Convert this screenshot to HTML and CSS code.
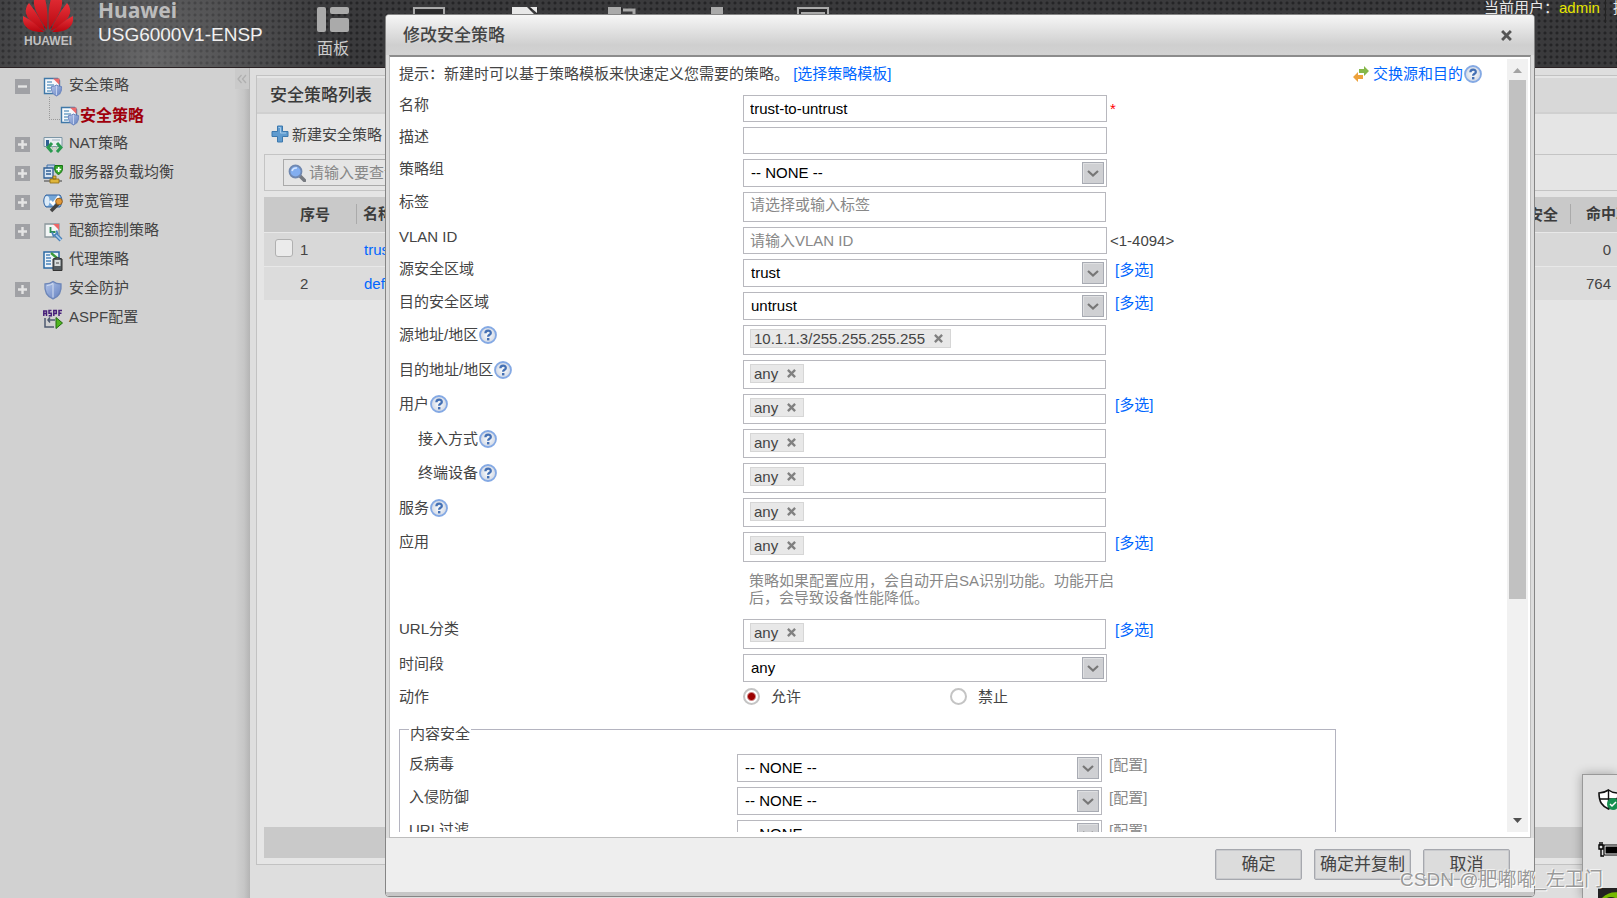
FILE: index.html
```html
<!DOCTYPE html>
<html lang="zh-CN">
<head>
<meta charset="utf-8">
<title>USG6000V1-ENSP</title>
<link rel="stylesheet" href="styles.css">
</head>
<body>
<svg class="defs" aria-hidden="true">
  <defs>
    <linearGradient id="shieldFill" x1="0" y1="0" x2="1" y2="1"><stop offset="0" stop-color="#b4c6ea"/><stop offset="1" stop-color="#6380c0"/></linearGradient>
    <linearGradient id="petalFill" x1="0" y1="0" x2="0" y2="1"><stop offset="0" stop-color="#e8323a"/><stop offset="1" stop-color="#b8060f"/></linearGradient>
    <radialGradient id="helpFill"><stop offset="0" stop-color="#fdfefe"/><stop offset="1" stop-color="#d0d7e4"/></radialGradient>
    <symbol id="help" viewBox="0 0 18 18">
      <circle cx="9" cy="9" r="8" fill="url(#helpFill)" stroke="#84a9e4" stroke-width="1.8"/>
      <path d="M6.400 7.200c0-3.400 5.400-3.400 5.400-.3 0 2-2.600 1.800-2.700 3.900" fill="none" stroke="#4470b4" stroke-width="2.300"/>
      <rect x="8" y="12" width="2.400" height="2.400" fill="#4470b4"/>
    </symbol>
    <symbol id="chev" viewBox="0 0 22 22">
      <rect x=".5" y=".5" width="21" height="21" fill="#cfd0d3" stroke="#a8abb3"/>
      <path d="M1.500 20.500V1.500h19" fill="none" stroke="#dfe0e2"/>
      <path d="M6 9l5 4.500L16 9" fill="none" stroke="#777" stroke-width="2.200"/>
    </symbol>
    <symbol id="cross" viewBox="0 0 10 10"><path d="M1 1l8 8M9 1L1 9" fill="none" stroke="currentColor" stroke-width="2.600"/></symbol>
    <symbol id="policy" viewBox="0 0 20 20">
      <path d="M1.500 1.500h13l2 2V16.500h-15z" fill="#f6f9fc" stroke="#3f78a8" stroke-width="1.400"/>
      <path d="M10 1.500h6.500V8z" fill="#ee6a6a"/>
      <path d="M4 5h5M4 8h7M4 11h4M4 14h4" stroke="#72a3c8" stroke-width="1.400"/>
      <path d="M8.500 9.500q3 0 5-1.500 2 1.500 5 1.500c.5 5-1.500 8-5 9.500-3.500-1.500-5.500-4.500-5-9.500z" fill="url(#shieldFill)" stroke="#6d86c0"/>
      <path d="M13.500 9v9" stroke="#c5d2ee"/>
    </symbol>
    <symbol id="toggleplus" viewBox="0 0 15 15"><path d="M0 0h15v15H0z" fill="#a0a1a5"/><path d="M3 7.500h9M7.500 3v9" stroke="#e4e4e4" stroke-width="2.400"/></symbol>
    <symbol id="toggleminus" viewBox="0 0 15 15"><path d="M0 0h15v15H0z" fill="#a0a1a5"/><path d="M3 7.500h9" stroke="#e4e4e4" stroke-width="2.400"/></symbol>
  </defs>
</svg>

<header class="top">
  <div class="logo">
    <svg viewBox="0 0 50 34" width="50" height="34" aria-hidden="true">
      <g fill="url(#petalFill)">
        <path d="M24 30C25 18 25 6 20-8c-8 2-11 8-8 16 2 7 7 14 12 22z"/>
        <path d="M26 30C25 18 25 6 30-8c8 2 11 8 8 16-2 7-7 14-12 22z"/>
        <path d="M22.500 31C19 21 13 12 6 3 0 10 3 17 9 22c4 4 9 7 13.500 9z"/>
        <path d="M27.500 31C31 21 37 12 44 3c6 7 3 14-3 19-4 4-9 7-13.500 9z"/>
        <path d="M21 32C15 26 8 20 0 16c-1 9 4 13 10 15 4 1 8 1 11 1z"/>
        <path d="M29 32c6-6 13-12 21-16 1 9-4 13-10 15-4 1-8 1-11 1z"/>
      </g>
    </svg>
    <span class="logo-name">HUAWEI</span>
  </div>
  <div class="product"><strong>Huawei</strong><span>USG6000V1-ENSP</span></div>
  <nav class="mainnav" aria-label="主导航">
    <a href="#" class="nav">
      <svg viewBox="0 0 32 25" width="32" height="25" aria-hidden="true"><g fill="#aaa"><rect width="9" height="25" rx="2"/><rect x="13" width="19" height="7" rx="2"/><rect x="13" y="11" width="19" height="14" rx="2"/></g></svg>
      <span>面板</span>
    </a>
    <a href="#" class="nav" aria-label="监控"><svg viewBox="0 0 32 25" width="32" height="25" aria-hidden="true"><rect x="1" y="1" width="30" height="20" fill="#2b2b2d" stroke="#aaa" stroke-width="2"/></svg></a>
    <a href="#" class="nav" aria-label="策略"><svg viewBox="0 0 32 25" width="32" height="25" aria-hidden="true"><path d="M3 0h15l10 10v15H3zM21 0h7v6z" fill="#e8e8e8"/></svg></a>
    <a href="#" class="nav" aria-label="对象"><svg viewBox="0 0 32 25" width="32" height="25" aria-hidden="true"><path d="M3 0h13v13H3z" fill="#aaa"/><path d="M18 3h11v8" fill="none" stroke="#aaa" stroke-width="3"/></svg></a>
    <a href="#" class="nav" aria-label="网络"><svg viewBox="0 0 32 25" width="32" height="25" aria-hidden="true"><path d="M10 0h12v12H10z" fill="#aaa"/></svg></a>
    <a href="#" class="nav" aria-label="系统"><svg viewBox="0 0 32 25" width="32" height="25" aria-hidden="true"><rect x="1" y="1" width="30" height="20" fill="#2b2b2d" stroke="#aaa" stroke-width="2"/><path d="M5 6h22v12H5z" fill="none" stroke="#aaa" stroke-width="2"/></svg></a>
  </nav>
  <div class="user"><span>当前用户：</span><b>admin</b><a href="#">提交</a></div>
</header>

<div class="below">
  <aside class="side">
    <ul class="tree">
      <li><button class="tg" aria-label="收起"><svg width="15" height="15"><use href="#toggleminus"/></svg></button><a href="#"><svg class="ic" width="20" height="20"><use href="#policy"/></svg><span>安全策略</span></a></li>
      <li class="sub"><a href="#"><svg class="ic" width="20" height="20"><use href="#policy"/></svg><span>安全策略</span></a></li>
      <li><button class="tg" aria-label="展开"><svg width="15" height="15"><use href="#toggleplus"/></svg></button><a href="#">
        <svg class="ic" viewBox="0 0 20 20" width="20" height="20"><path d="M1 2.500h18v9H1z" fill="#e8eef2" stroke="#7d96a6"/><path d="M3 5h3v6H3z" fill="#2f5f94"/><path d="M9 5h8" stroke="#a0b3c0"/><path d="M9 8l-4 4.500L9 17M14 8l4 4.500-4 4.500" fill="none" stroke="#2a9a50" stroke-width="3"/><path d="M9 12.500h1M13 12.500h1" stroke="#8fd6a0" stroke-width="2"/></svg><span>NAT策略</span></a></li>
      <li><button class="tg" aria-label="展开"><svg width="15" height="15"><use href="#toggleplus"/></svg></button><a href="#">
        <svg class="ic" viewBox="0 0 20 20" width="20" height="20"><path d="M4 1h8v4H4z" fill="#b9cde4" stroke="#4473a8"/><path d="M1 4h9v10H1z" fill="#d8e6f4" stroke="#2f5f94" stroke-width="1.300"/><path d="M3 7h5M3 10h5" stroke="#2f5f94" stroke-width="1.400"/><path d="M12 1.500h7.500c.5 5-1 7.500-4 9-3-1.500-4.500-4-3.500-9z" fill="#35a827" stroke="#157014"/><path d="M15.700 3v5M13.200 5.500h5" stroke="#fff" stroke-width="1.600"/><path d="M1 17h18" stroke="#888" stroke-width="2"/><path d="M7 15h9v4H7zM10 12h3v3h-3z" fill="#dfb53a" stroke="#8c6b12" stroke-width=".8"/></svg><span>服务器负载均衡</span></a></li>
      <li><button class="tg" aria-label="展开"><svg width="15" height="15"><use href="#toggleplus"/></svg></button><a href="#">
        <svg class="ic" viewBox="0 0 20 20" width="20" height="20"><path d="M3 2h14c3 4 2 9 0 12H3C0 11 0 5 3 2z" fill="#75a7d8" stroke="#3564a0"/><ellipse cx="4" cy="8" rx="2.500" ry="5" fill="#dcebf8"/><path d="M7 8l3 3 6-8" fill="none" stroke="#fff" stroke-width="2.500"/><path d="M8 18l7-7" stroke="#444" stroke-width="3.600"/><circle cx="16" cy="8.500" r="3.300" fill="#e39a3a" stroke="#99601a"/></svg><span>带宽管理</span></a></li>
      <li><button class="tg" aria-label="展开"><svg width="15" height="15"><use href="#toggleplus"/></svg></button><a href="#">
        <svg class="ic" viewBox="0 0 20 20" width="20" height="20"><path d="M2 2h14v13H2z" fill="#f3f6f6" stroke="#8b979c" stroke-width="1.300"/><path d="M10 2h6v6z" fill="#e66"/><path d="M7.500 5v5h5" fill="none" stroke="#2c8f55" stroke-width="1.800"/><path d="M12 12l6 6" stroke="#4a82ba" stroke-width="4"/><path d="M9 10l1.500 4 4-2.500-1-3" fill="none" stroke="#4a82ba" stroke-width="1.800"/><path d="M13 13l5 5" stroke="#a9cdee" stroke-width="1.600"/></svg><span>配额控制策略</span></a></li>
      <li class="leaf"><a href="#">
        <svg class="ic" viewBox="0 0 20 20" width="20" height="20"><path d="M1 1h15v16H1z" fill="#edf4fa" stroke="#2c69a4" stroke-width="1.500"/><path d="M3 4h4M3 7h5M3 10h5M3 13h5" stroke="#4d85ba" stroke-width="1.400"/><path d="M8 2l6 5" stroke="#3b9a3b" stroke-width="2.400"/><path d="M10 8q4.500-3 9 0v11.500h-9z" fill="#555c60" stroke="#333"/><path d="M11.500 9h6v6h-6z" fill="#d8dcdc"/><path d="M13 12h3" stroke="#444"/></svg><span>代理策略</span></a></li>
      <li><button class="tg" aria-label="展开"><svg width="15" height="15"><use href="#toggleplus"/></svg></button><a href="#">
        <svg class="ic" viewBox="0 0 20 20" width="20" height="20"><path d="M2 4q5 0 8-2.500Q13 4 18 4c.8 7.500-2 12.500-8 15C4 16.500 1.200 11.500 2 4z" fill="url(#shieldFill)" stroke="#6d86b8" stroke-width="1.300"/><path d="M4 5.500q3.500-.3 6-2v14" fill="none" stroke="#d4dff2"/></svg><span>安全防护</span></a></li>
      <li class="leaf"><a href="#">
        <svg class="ic" viewBox="0 0 20 20" width="20" height="20"><path d="M.8 7V2h2.700v5M.8 4.500h2.700M8.500 1.500H6v2.700h2.300v2.500H5.700M10.800 7V1.500h2.500v3h-2.500M19 1.500h-3V7M16 4.200h2.500" fill="none" stroke="#47207a" stroke-width="1.500"/><path d="M2 9v9h9M5 11h7M7 8.500L5 11l2 2.500" fill="none" stroke="#4d5a70" stroke-width="1.500"/><path d="M13 8.500l6.500 5.500-6.500 5.500z" fill="#4fb51f" stroke="#216a10"/></svg><span>ASPF配置</span></a></li>
    </ul>
    <button class="collapse" aria-label="折叠"><svg viewBox="0 0 10 10" width="10" height="10"><path d="M4.500 1L1 5l3.500 4M9 1L5.500 5 9 9" fill="none" stroke="#b0b0b0" stroke-width="1.300"/></svg></button>
  </aside>

  <main class="main">
    <section class="panel">
      <h2>安全策略列表</h2>
      <div class="tools"><button class="add"><svg viewBox="0 0 18 18" width="18" height="18"><path d="M6.500 1h5v5.500H17v5h-5.500V17h-5v-5.500H1v-5h5.500z" fill="#5f9bcf" stroke="#3c78ad"/><path d="M7.500 2.500h2v5.500H15" fill="none" stroke="#a5cbea"/></svg>新建安全策略</button></div>
      <div class="filter"><label class="search"><svg viewBox="0 0 18 18" width="18" height="18" aria-hidden="true"><path d="M12 12l4.500 4.500" stroke="#777a80" stroke-width="3.600" stroke-linecap="round"/><circle cx="7.500" cy="7.500" r="6" fill="#82aef0" stroke="#7088b0" stroke-width="1.800"/><path d="M4 7q1-3.500 5-3" stroke="#d6e6ff" stroke-width="1.600" fill="none"/></svg><input type="text" aria-label="搜索" placeholder="请输入要查询的内容"></label></div>
      <table class="list">
        <thead><tr><th class="c-no">序号</th><th class="c-name"><span class="cell">名称</span></th><th class="c-sec">内容安全</th><th class="c-hit"><span class="cell">命中次数</span></th></tr></thead>
        <tbody>
          <tr><td class="c-no"><input type="checkbox" aria-label="选择 1">1</td><td class="c-name"><a href="#">trust-to-untrust</a></td><td></td><td class="c-hit">0</td></tr>
          <tr><td class="c-no">2</td><td class="c-name"><a href="#">default</a></td><td></td><td class="c-hit">764</td></tr>
        </tbody>
      </table>
      <div class="pager"></div>
    </section>
  </main>
</div>

<section class="dialog" role="dialog" aria-labelledby="dlg-title">
  <div class="titlebar"><h1 id="dlg-title">修改安全策略</h1><button class="close" aria-label="关闭"><svg width="11" height="11"><use href="#cross"/></svg></button></div>
  <div class="body">
    <form class="form">
      <div class="hint"><span>提示：新建时可以基于策略模板来快速定义您需要的策略。 <a href="#">[选择策略模板]</a></span>
        <span class="swap"><svg viewBox="0 0 18 16" width="18" height="16" aria-hidden="true"><path d="M7 3h5V0l5 5-5 5V7H7z" fill="#86b84a"/><path d="M11 9H6V6L1 11l5 5v-3h5z" fill="#eda23c"/></svg><a href="#">交换源和目的</a><svg width="18" height="18"><use href="#help"/></svg></span></div>
      <div class="row"><label for="f-name">名称</label><input class="box" id="f-name" type="text" value="trust-to-untrust"><span class="must">*</span></div>
      <div class="row"><label for="f-desc">描述</label><input class="box" id="f-desc" type="text"></div>
      <div class="row"><label for="f-grp">策略组</label><span class="sel"><select id="f-grp"><option>-- NONE --</option></select><svg width="22" height="22"><use href="#chev"/></svg></span></div>
      <div class="row"><label for="f-tag">标签</label><input class="box tall" id="f-tag" type="text" placeholder="请选择或输入标签"></div>
      <div class="row"><label for="f-vlan">VLAN ID</label><input class="box" id="f-vlan" type="text" placeholder="请输入VLAN ID"><span class="range">&lt;1-4094&gt;</span></div>
      <div class="row"><label for="f-src">源安全区域</label><span class="sel"><select id="f-src"><option>trust</option></select><svg width="22" height="22"><use href="#chev"/></svg></span><a class="more" href="#">[多选]</a></div>
      <div class="row"><label for="f-dst">目的安全区域</label><span class="sel"><select id="f-dst"><option>untrust</option></select><svg width="22" height="22"><use href="#chev"/></svg></span><a class="more" href="#">[多选]</a></div>
      <div class="tagrows">
        <div class="row"><span class="lab">源地址/地区<svg width="18" height="18"><use href="#help"/></svg></span><div class="tags"><span class="chip">10.1.1.3/255.255.255.255<button type="button" aria-label="删除"><svg width="9" height="9"><use href="#cross"/></svg></button></span></div></div>
        <div class="row"><span class="lab">目的地址/地区<svg width="18" height="18"><use href="#help"/></svg></span><div class="tags"><span class="chip">any<button type="button" aria-label="删除"><svg width="9" height="9"><use href="#cross"/></svg></button></span></div></div>
        <div class="row"><span class="lab">用户<svg width="18" height="18"><use href="#help"/></svg></span><div class="tags"><span class="chip">any<button type="button" aria-label="删除"><svg width="9" height="9"><use href="#cross"/></svg></button></span></div><a class="more" href="#">[多选]</a></div>
        <div class="row"><span class="lab indent">接入方式<svg width="18" height="18"><use href="#help"/></svg></span><div class="tags"><span class="chip">any<button type="button" aria-label="删除"><svg width="9" height="9"><use href="#cross"/></svg></button></span></div></div>
        <div class="row"><span class="lab indent">终端设备<svg width="18" height="18"><use href="#help"/></svg></span><div class="tags"><span class="chip">any<button type="button" aria-label="删除"><svg width="9" height="9"><use href="#cross"/></svg></button></span></div></div>
        <div class="row"><span class="lab">服务<svg width="18" height="18"><use href="#help"/></svg></span><div class="tags"><span class="chip">any<button type="button" aria-label="删除"><svg width="9" height="9"><use href="#cross"/></svg></button></span></div></div>
        <div class="row"><span class="lab">应用</span><div class="tags"><span class="chip">any<button type="button" aria-label="删除"><svg width="9" height="9"><use href="#cross"/></svg></button></span></div><a class="more" href="#">[多选]</a></div>
      </div>
      <p class="note">策略如果配置应用，会自动开启SA识别功能。功能开启后，会导致设备性能降低。</p>
      <div class="row"><span class="lab">URL分类</span><div class="tags"><span class="chip">any<button type="button" aria-label="删除"><svg width="9" height="9"><use href="#cross"/></svg></button></span></div><a class="more" href="#">[多选]</a></div>
      <div class="row"><label for="f-time">时间段</label><span class="sel"><select id="f-time"><option>any</option></select><svg width="22" height="22"><use href="#chev"/></svg></span></div>
      <div class="row"><span class="lab">动作</span><div class="radios"><label><input type="radio" name="act" checked>允许</label><label><input type="radio" name="act">禁止</label></div></div>
      <fieldset>
        <legend>内容安全</legend>
        <div class="row"><label for="f-av">反病毒</label><span class="sel"><select id="f-av"><option>-- NONE --</option></select><svg width="22" height="22"><use href="#chev"/></svg></span><span class="conf">[配置]</span></div>
        <div class="row"><label for="f-ips">入侵防御</label><span class="sel"><select id="f-ips"><option>-- NONE --</option></select><svg width="22" height="22"><use href="#chev"/></svg></span><span class="conf">[配置]</span></div>
        <div class="row"><label for="f-url">URL过滤</label><span class="sel"><select id="f-url"><option>-- NONE --</option></select><svg width="22" height="22"><use href="#chev"/></svg></span><span class="conf">[配置]</span></div>
      </fieldset>
    </form>
    <div class="scroll" aria-hidden="true">
      <svg viewBox="0 0 21 21" width="21" height="21"><path d="M6 14l4.500-5 4.500 5z" fill="#a3a3a3"/></svg>
      <div class="track"><div class="thumb"></div></div>
      <svg viewBox="0 0 21 21" width="21" height="21"><path d="M6 7l4.500 5L15 7z" fill="#505050"/></svg>
    </div>
  </div>
  <div class="foot"><button class="btn">确定</button><button class="btn">确定并复制</button><button class="btn">取消</button></div>
</section>

<div class="tray" aria-hidden="true">
  <svg viewBox="0 0 24 24" width="24" height="24"><path d="M10.500 2Q6 5 1 5c0 9 3 13 9.500 16C17 18 20 14 20 5 15 5 13 4 10.500 2z" fill="#fff" stroke="#111" stroke-width="1.600"/><path d="M10.500 2v19M1.500 11H20" stroke="#111" stroke-width="1.400"/><circle cx="15" cy="16" r="6" fill="#169050"/><path d="M12 16l2 2 4-4" fill="none" stroke="#fff" stroke-width="1.500"/></svg>
  <svg viewBox="0 0 24 16" width="24" height="16"><path d="M1 3v4h4V3zM2 3V0M4 3V0M3 7v7h3" fill="none" stroke="#000" stroke-width="1.400"/><path d="M6 3h17v10H6z" fill="#fff" stroke="#000" stroke-width="1.200"/><path d="M7.500 4.500h15v7h-15z"/></svg>
  <svg viewBox="0 0 24 24" width="24" height="24"><path d="M0 0h24v24H0z" fill="#222"/><path d="M3 11q8-9 21-6v19h-9z" fill="#76b900"/><path d="M7 11q6-4 12 0-6 6-12 0z" fill="#222"/></svg>
</div>
<div class="mark">CSDN @肥嘟嘟_左卫门</div>
</body>
</html>
```

FILE: styles.css
```css
* { box-sizing: border-box; }

body {
  margin: 0;
  height: 100vh;
  display: flex;
  flex-direction: column;
  overflow: hidden;
  position: relative;
  font: 15px/19px "Liberation Sans", "Noto Sans CJK SC", sans-serif;
  color: #444;
  background: #dedede;
}

a { color: #06f; text-decoration: none; }
button, input, select { font: inherit; color: inherit; margin: 0; }
button { padding: 0; border: 0; background: none; }
svg { flex: none; display: block; }
.defs { position: absolute; width: 0; height: 0; }

/* header */
.top {
  flex: none;
  height: 68px;
  display: flex;
  align-items: flex-start;
  overflow: hidden;
  background:
    radial-gradient(circle at 150px 60px, rgba(170, 170, 170, .4), rgba(0, 0, 0, 0) 190px),
    radial-gradient(circle, #242426 0 1px, rgba(0, 0, 0, 0) 2px) 0 0 / 6px 6px,
    #3a3a3c;
  border-bottom: 1px solid #2a2224;
}
.logo { width: 50px; margin-left: 23px; color: #c0c0c0; }
.logo-name { display: block; font-size: 12px; line-height: 14px; font-weight: bold; text-align: center; }
.product { width: 187px; margin-left: 25px; display: flex; flex-direction: column; white-space: nowrap; }
.product strong { font: bold 21px/20px "Noto Sans", sans-serif; color: #bcbcbc; }
.product span { font-size: 19px; line-height: 29px; color: #f0f0f0; }
.mainnav { display: flex; padding-top: 7px; }
.nav { width: 96px; display: flex; flex-direction: column; align-items: center; color: #ccc; font-size: 16px; line-height: 22px; gap: 6px; }
.user { width: 133px; margin-left: auto; display: flex; overflow: hidden; white-space: nowrap; line-height: 16px; color: #e8e8e8; }
.user b { font-weight: normal; color: #e6e600; }
.user a { color: #e8e8e8; margin-left: 5px; padding-left: 7px; height: 23px; border-left: 1px solid #222; }

/* navigation tree */
.below { flex: 1; display: flex; min-height: 0; }
.side {
  flex: none;
  width: 250px;
  display: flex;
  align-items: flex-start;
  background: linear-gradient(90deg, #d1d1d1 235px, #c6c6c6 244px, #b4b4b4 250px);
}
.tree { flex: 1; list-style: none; margin: 0; padding: 4px 0 0 15px; }
.tree li { height: 29px; display: flex; align-items: center; }
.tree a { display: flex; align-items: center; gap: 6px; color: #444; }
.tree span { padding-bottom: 4px; }
.tg { width: 15px; margin-right: 13px; }
.tree .leaf { padding-left: 28px; }
.tree .sub { padding-left: 34px; }
.tree .sub::before { content: ""; width: 10px; height: 22px; margin-bottom: 14px; border: dotted #999; border-width: 0 0 1px 1px; }
.tree .sub a { color: #a0000c; font-weight: bold; gap: 0; }
.tree .sub span { font-size: 16px; padding-bottom: 0; }
.collapse { width: 14px; height: 21px; margin-right: 1px; background: #cacaca; display: grid; place-items: center; }

/* policy list */
.main { flex: 1; min-width: 0; padding: 7px 0 33px 6px; display: flex; overflow: hidden; }
.panel {
  flex: none;
  width: calc(100% + 60px);
  display: flex;
  flex-direction: column;
  border: 1px solid #c2c2c2;
  background: #e5e5e5;
  padding: 2px 0 6px;
}
.panel h2 { margin: 0; padding: 1px 0 0 13px; font-size: 17px; line-height: 33px; font-weight: 500; color: #3a3a3a; background: #d8d8d8; border-bottom: 2px solid #d0d0d0; }
.tools { height: 40px; padding-left: 14px; display: flex; align-items: center; }
.add { display: flex; align-items: center; gap: 3px; }
.filter { height: 37px; margin: 0 0 6px 7px; padding: 4px 0 0 18px; border: 1px solid #c4c4c4; }
.search { width: 260px; height: 27px; display: flex; align-items: center; gap: 3px; padding-left: 4px; border: 1px solid #aaa; }
.search input { flex: 1; min-width: 0; border: 0; padding: 0; background: none; outline: 0; }
::placeholder { color: #888; opacity: 1; }
.list { margin-left: 7px; width: calc(100% - 7px); border-collapse: collapse; table-layout: fixed; }
.list th { height: 35px; padding: 0; background: #c9c9c9; text-align: left; color: #3c3c3c; }
.list td { height: 34px; padding: 0; background: #dcdcdc; border-top: 1px solid #e8e8e8; }
.list tbody tr:first-child td { background: #d8d8d8; }
.list .c-no { width: 92px; padding-left: 36px; }
.list td.c-no input { appearance: none; width: 18px; height: 18px; margin: 0 7px 0 -25px; vertical-align: -2px; border: 1px solid #b0b0b0; border-radius: 3px; background: #ebebeb; }
.list .c-sec { text-align: right; padding-right: 12px; }
.list .c-hit { width: 106px; }
.list td.c-hit { text-align: right; padding-right: 65px; }
.list td.c-name { padding-left: 8px; }
.cell { display: block; line-height: 20px; border-left: 1px solid #aaa; padding-left: 6px; }
.c-hit .cell { padding-left: 15px; }
.pager { height: 31px; margin: auto 0 0 7px; background: #c9c9c9; }

/* dialog */
.dialog {
  position: absolute;
  inset: 14px 82px 1px 385px;
  display: flex;
  flex-direction: column;
  border: 1px solid #858585;
  border-radius: 4px;
  background: #dcdcdc;
  overflow: hidden;
}
.titlebar { flex: none; height: 40px; padding: 1px 22px 0 17px; display: flex; align-items: center; justify-content: space-between; background: linear-gradient(#f6f6f6, #cfcfcf 75%, #d2d2d2); }
.titlebar h1 { margin: 0; font-size: 17px; line-height: 21px; font-weight: 500; color: #444; }
.close { color: #555; }
.body {
  flex: 1;
  min-height: 0;
  margin: 0 3px;
  display: flex;
  padding: 2px 2px 5px 0;
  background: #fff;
  border: 1px solid #bdbdbd;
  border-top: 2px solid #8c8c8c;
}
.form { flex: 1; min-width: 0; overflow: hidden; padding: 5px 0 0 9px; }
.hint { display: flex; justify-content: space-between; padding-right: 25px; margin-bottom: 12px; height: 19px; }
.swap { display: flex; align-items: center; }
.swap a { margin: 0 1px 0 3px; }
.row { display: grid; grid-template-columns: 344px 364px auto; align-items: start; margin-bottom: 5px; }
.row label, .lab { display: flex; align-items: center; gap: 1px; line-height: 19px; height: 19px; }
.lab.indent { padding-left: 19px; }
.box { height: 27px; padding: 0 6px; border: 1px solid #b8b8be; background: #fff; outline: 0; color: #000; }
.box.tall { height: 30px; width: 363px; padding-bottom: 6px; }
.must { padding-left: 3px; color: #f00; font-size: 15px; line-height: 27px; }
.range { padding-left: 3px; line-height: 27px; }
.more { padding-left: 8px; line-height: 22px; }
.conf { padding-left: 7px; line-height: 22px; color: #888; }
.sel { display: grid; grid-template-columns: 1fr 25px; align-items: center; }
.sel select { grid-area: 1 / 1 / 2 / 3; height: 28px; padding: 0 30px 2px 7px; appearance: none; border: 1px solid #b8b8be; border-radius: 0; background: #fff; color: #000; }
.sel svg { grid-area: 1 / 2; pointer-events: none; z-index: 1; }
.tags { width: 363px; height: 30px; padding: 3px 6px; display: flex; align-items: flex-start; border: 1px solid #b8b8be; }
.tagrows .row:nth-child(even) .tags { height: 29px; }
.chip { height: 19px; display: flex; align-items: center; gap: 9px; padding: 0 7px 0 3px; line-height: 17px; background: #e8e8e8; border: 1px solid #d6d6d6; }
.chip button { color: #808080; }
.note { width: 366px; margin: 10px 0 13px 350px; line-height: 17px; color: #888; }
.radios { display: flex; }
.row .radios label { flex: none; width: 207px; gap: 11px; }
.radios input { appearance: none; width: 17px; height: 17px; border: 2px solid #c4c4c4; border-radius: 50%; background: #fff; }
.radios input:checked { background: radial-gradient(circle, #9c0000 0 3px, #fff 5px); }
fieldset { max-width: 937px; margin: 10px 0 0; padding: 11px 0 0 9px; border: 1px solid #b4b4c0; }
legend { padding: 8px 1px 0; line-height: 19px; }
fieldset .row { grid-template-columns: 328px 365px auto; }

.scroll { flex: none; width: 21px; display: flex; flex-direction: column; background: #f1f1f1; }
.track { flex: 1; padding: 0 2px; }
.thumb { height: 71%; background: #c1c1c1; }

.foot { flex: none; height: 58px; padding: 11px 24px 0; display: flex; justify-content: flex-end; align-items: flex-start; gap: 12px; background: #eee; border-bottom: 4px solid #c6c6c6; }
.btn { min-width: 87px; height: 31px; padding: 0 5px; font-size: 17px; line-height: 20px; color: #444; background: #dcdcdc; border: 1px solid #a6a8ae; border-radius: 2px; box-shadow: inset 0 0 0 1px #c9cacd; }

/* system tray flyout and page mark lie over the page */
.tray { position: absolute; right: 0; bottom: 0; width: 35px; height: 124px; padding: 13px 0 0 15px; overflow: hidden; display: flex; flex-direction: column; gap: 30px; background: #e1e1e1; border: solid #999; border-width: 1px 0 0 1px; box-shadow: 0 0 10px rgba(0, 0, 0, .3); }
.mark { position: absolute; right: 14px; bottom: 5px; font-size: 19px; line-height: 26px; color: #999; text-shadow: 1px 1px 0 #fff, -1px -1px 0 rgba(255, 255, 255, .6); }
```
